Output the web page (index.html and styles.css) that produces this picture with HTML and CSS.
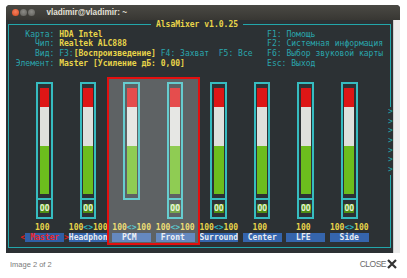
FILE: index.html
```html
<!DOCTYPE html>
<html lang="ru">
<head>
<meta charset="utf-8">
<title>AlsaMixer</title>
<link rel="stylesheet" href="styles.css">
</head>
<body>
<div class="window">
  <div class="titlebar">
    <span class="btn btn-close"></span><span class="btn"></span><span class="btn"></span>
    <span class="wtitle">vladimir@vladimir: ~</span>
  </div>
  <div class="termwrap">
    <div class="term">
      <div class="frame">
        <div class="header">
          <div class="info"><div>  <span class="t">Карта:</span> <b class="y">HDA Intel</b></div><div>    <span class="t">Чип:</span> <b class="y">Realtek ALC888</b></div><div>    <span class="t">Вид:</span> <span class="t">F3:</span><b class="y">[Воспроизведение]</b> <span class="t">F4: Захват  F5: Все</span></div><div><span class="t">Элемент:</span> <b class="y">Master [Усиление дБ: 0,00]</b></div></div>
          <div class="keys"><div>F1: Помощь</div><div>F2: Системная информация</div><div>F6: Выбор звуковой карты</div><div>Esc: Выход</div></div>
        </div>
        <div class="mixer">
          <div class="channel">
            <div class="box"><div class="bar"></div><div class="divider"></div><div class="sw">OO</div></div>
            <div class="val">  100</div>
            <div class="name"><span class="arrow">&lt;</span><span class="label cur"> Master </span><span class="arrow">&gt;</span></div>
          </div>
          <div class="channel">
            <div class="box"><div class="bar"></div><div class="divider"></div><div class="sw">OO</div></div>
            <div class="val">100<i>&lt;&gt;</i>100</div>
            <div class="name"><span class="arrow"></span><span class="label">Headphon</span></div>
          </div>
          <div class="channel no-switch">
            <div class="box"><div class="bar"></div></div>
            <div class="val">100<i>&lt;&gt;</i>100</div>
            <div class="name"><span class="arrow"></span><span class="label">  PCM   </span></div>
          </div>
          <div class="channel">
            <div class="box"><div class="bar"></div><div class="divider"></div><div class="sw">OO</div></div>
            <div class="val">100<i>&lt;&gt;</i>100</div>
            <div class="name"><span class="arrow"></span><span class="label"> Front  </span></div>
          </div>
          <div class="channel">
            <div class="box"><div class="bar"></div><div class="divider"></div><div class="sw">OO</div></div>
            <div class="val">100<i>&lt;&gt;</i>100</div>
            <div class="name"><span class="arrow"></span><span class="label">Surround</span></div>
          </div>
          <div class="channel">
            <div class="box"><div class="bar"></div><div class="divider"></div><div class="sw">OO</div></div>
            <div class="val">  100</div>
            <div class="name"><span class="arrow"></span><span class="label"> Center </span></div>
          </div>
          <div class="channel">
            <div class="box"><div class="bar"></div><div class="divider"></div><div class="sw">OO</div></div>
            <div class="val">  100</div>
            <div class="name"><span class="arrow"></span><span class="label">  LFE   </span></div>
          </div>
          <div class="channel">
            <div class="box"><div class="bar"></div><div class="divider"></div><div class="sw">OO</div></div>
            <div class="val">100<i>&lt;&gt;</i>100</div>
            <div class="name"><span class="arrow"></span><span class="label">  Side  </span></div>
          </div>
        </div>
      </div>
      <div class="ftitle"> AlsaMixer v1.0.25 </div>
      <div class="more">&gt;
&gt;
&gt;
&gt;
&gt;
&gt;
&gt;</div>
      <div class="selection"></div>
    </div>
    <div class="scrollbar"></div>
  </div>
</div>
<div class="caption">
  <span class="count">Image 2 of 2</span>
  <span class="close">CLOSE<svg width="10" height="10" viewBox="0 0 10 10"><path d="M1 1L9 9M9 1L1 9" stroke="#333" stroke-width="2.2"/></svg></span>
</div>
</body>
</html>
```
FILE: styles.css
```css
* { box-sizing: border-box; }
:root { --rh: 9.67px; --bw: 2px; }
html, body { margin: 0; }
body {
  background: #fff;
  width: 407px;
  height: 278px;
  overflow: hidden;
  font-family: "Liberation Sans", Arial, sans-serif;
}
.window {
  margin: 5px 0 0 6px;
  width: 394px;
  background: #2c3134;
  border-radius: 4px 4px 0 0;
  overflow: hidden;
}
.titlebar {
  height: 15px;
  background: linear-gradient(#4a4944, #383733);
  display: flex;
  align-items: center;
  padding-left: 5.5px;
}
.btn {
  width: 7px;
  height: 7px;
  border-radius: 50%;
  margin-right: 1.3px;
  background: radial-gradient(circle at 50% 40%, #8c8b86, #5d5c57);
  flex: none;
}
.btn-close { background: radial-gradient(circle at 50% 40%, #f4805e, #d9481f); }
.wtitle {
  margin-left: 10px;
  color: #e4e0d7;
  font-weight: bold;
  font-size: 8.2px;
}
.termwrap { display: flex; height: 233px; }
.term {
  position: relative;
  flex: none;
  font-family: "DejaVu Sans Mono", monospace;
  font-size: 8.04px;
  line-height: var(--rh);
  width: 80ch;
  height: 233px;
  background: #2c3134;
  color: #2aa6ad;
}
.scrollbar {
  flex: 1;
  background: #ebebeb;
  border-left: 1px solid #cfcfcf;
}
.frame {
  margin: calc(var(--rh) / 2 - 0.5px) 0 0 calc(0.5ch - 0.5px);
  width: calc(79ch + 1px);
  height: calc(23 * var(--rh) + 1px);
  border: 1px solid #22a6ab;
  padding: calc(var(--rh) / 2 - 0.5px) 0 0 calc(1.5ch - 0.5px);
}
.header { display: flex; height: calc(4 * var(--rh)); white-space: pre; }
.info { width: 52ch; flex: none; }
.t { color: #2aa6ad; }
.y { color: #e8d44a; font-weight: bold; }
.keys { color: #2aa6ad; }
.mixer { display: flex; margin-top: var(--rh); padding-left: 2ch; }
.channel { width: 9ch; flex: none; display: flex; flex-direction: column; }
.box {
  margin: calc(var(--rh) / 2 - var(--bw) / 2) 0 0 calc(2.5ch - var(--bw) / 2);
  width: calc(3ch + var(--bw));
  border: var(--bw) solid #36bcc0;
  padding: calc(var(--rh) / 2 - var(--bw) / 2) 0;
}
.bar {
  width: 2ch;
  margin: 0 auto;
  height: calc(11 * var(--rh));
  background: linear-gradient(to bottom, #dd1616 0 18.18%, #dfe0dc 18.18% 54.55%, #6cbd1d 54.55%);
}
.divider {
  height: var(--bw);
  background: #36bcc0;
  margin: calc(var(--rh) / 2 - var(--bw) / 2) 0;
}
.sw {
  width: 2ch;
  height: var(--rh);
  margin: 0 auto;
  background: #4f8f14;
  color: #e6f0d8;
  font-weight: bold;
  text-align: center;
}
.val {
  margin-top: calc(var(--rh) / 2 - var(--bw) / 2);
  height: var(--rh);
  white-space: pre;
  color: #e8d44a;
  font-weight: bold;
}
.no-switch .val { margin-top: calc(2.5 * var(--rh) - var(--bw) / 2); }
.val i { font-style: normal; color: #2ab8c0; }
.name { display: flex; margin-left: -1ch; height: var(--rh); white-space: pre; font-weight: bold; }
.arrow { width: 1ch; flex: none; color: #e02020; }
.label { width: 8ch; flex: none; background: #3565ad; color: #e8ecf2; }
.label.cur { color: #e8262a; background: #2f5ea6; }
.ftitle {
  position: absolute;
  top: 0;
  left: 30ch;
  white-space: pre;
  background: #2c3134;
  color: #e8d44a;
  font-weight: bold;
}
.more {
  position: absolute;
  left: 79ch;
  top: calc(9 * var(--rh));
  width: 1ch;
  white-space: pre;
  background: #2c3134;
  color: #22a6ab;
  text-align: center;
}
.selection {
  position: absolute;
  left: calc(21ch - 0.5px);
  top: 57px;
  width: calc(19ch + 1px);
  height: 168px;
  border: 2px solid #e30f0f;
  background: rgba(255, 255, 255, 0.24);
}
.caption {
  display: flex;
  justify-content: space-between;
  align-items: center;
  margin: 6px 10px 0 10px;
  height: 10px;
}
.count { color: #7a7a7a; font-size: 7.5px; }
.close {
  display: flex;
  align-items: center;
  gap: 1px;
  color: #6a6a6a;
  font-size: 8.5px;
  letter-spacing: -0.5px;
}
```
